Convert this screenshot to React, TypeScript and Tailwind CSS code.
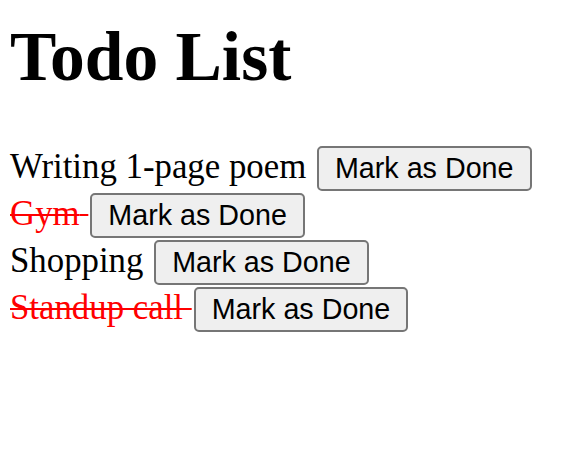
import React from "react";

const todos = [
  { text: "Writing 1-page poem", done: false },
  { text: "Gym", done: true },
  { text: "Shopping", done: false },
  { text: "Standup call", done: true },
];

export default function App() {
  return (
    <div className="bg-white min-h-[449px] w-[580px] pl-[10px] pt-[17px] font-['Liberation_Serif',serif] text-black">
      <h1 className="text-[69.5px] font-bold leading-[80px] m-0">Todo List</h1>
      <div className="mt-[48px] text-[34.8px]">
        {todos.map((t, i) => (
          <div key={i} className="leading-[39px]">
            <span
              className={
                t.done
                  ? "text-[#ff0000] line-through decoration-[#ff0000] decoration-2"
                  : ""
              }
            >
              {t.text}{" "}
            </span>
            <button className="ml-[2px] my-[1px] align-baseline font-['Liberation_Sans',Arial,sans-serif] text-[28.7px] leading-[33px] px-[16px] py-[4px] border-2 border-[#767676] rounded-[5px] bg-[#efefef] text-black">
              Mark as Done
            </button>
          </div>
        ))}
      </div>
    </div>
  );
}
